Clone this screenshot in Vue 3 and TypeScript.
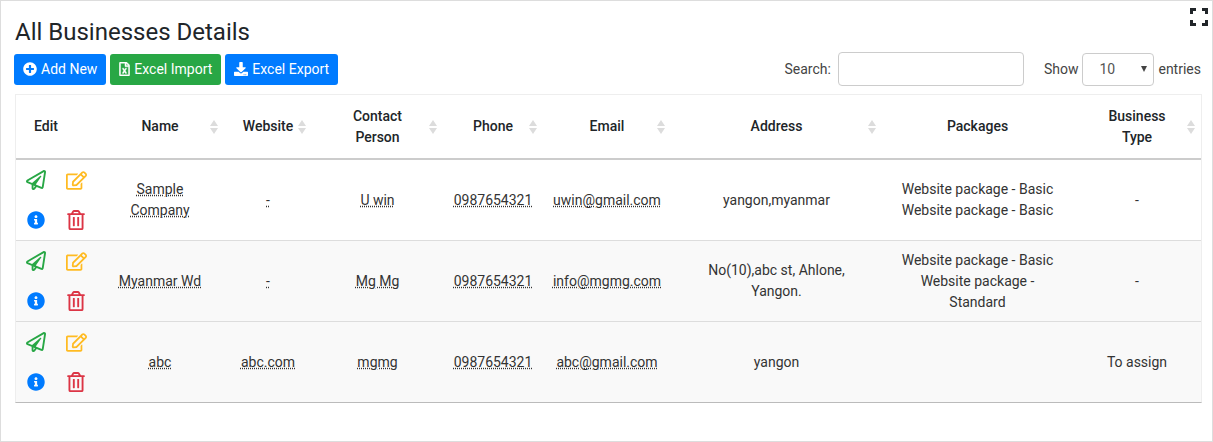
<script setup lang="ts">
import { ref } from 'vue'

interface Business {
  name: string
  website: string
  contact: string
  phone: string
  email: string
  address: string
  packages: string[]
  type: string
}

interface Column {
  label: string
  key: string
  sortable: boolean
}

const columns: Column[] = [
  { label: 'Edit', key: 'edit', sortable: false },
  { label: 'Name', key: 'name', sortable: true },
  { label: 'Website', key: 'website', sortable: true },
  { label: 'Contact Person', key: 'contact', sortable: true },
  { label: 'Phone', key: 'phone', sortable: true },
  { label: 'Email', key: 'email', sortable: true },
  { label: 'Address', key: 'address', sortable: true },
  { label: 'Packages', key: 'packages', sortable: false },
  { label: 'Business Type', key: 'type', sortable: true },
]

const businesses: Business[] = [
  {
    name: 'Sample Company',
    website: '-',
    contact: 'U win',
    phone: '0987654321',
    email: 'uwin@gmail.com',
    address: 'yangon,myanmar',
    packages: ['Website package - Basic', 'Website package - Basic'],
    type: '-',
  },
  {
    name: 'Myanmar Wd',
    website: '-',
    contact: 'Mg Mg',
    phone: '0987654321',
    email: 'info@mgmg.com',
    address: 'No(10),abc st, Ahlone, Yangon.',
    packages: ['Website package - Basic', 'Website package - Standard'],
    type: '-',
  },
  {
    name: 'abc',
    website: 'abc.com',
    contact: 'mgmg',
    phone: '0987654321',
    email: 'abc@gmail.com',
    address: 'yangon',
    packages: [],
    type: 'To assign',
  },
]

const search = ref('')
const pageSize = ref('10')
</script>

<template>
  <main class="panel">
    <button class="fullscreen" type="button" aria-label="Full screen">
      <svg viewBox="0 0 18 18" width="18" height="18" fill="none" stroke="#212529" stroke-width="3">
        <path d="M1.500 6V1.500H6M12 1.500H16.500V6M16.500 12V16.500H12M6 16.500H1.500V12" />
      </svg>
    </button>
    <h1>All Businesses Details</h1>
    <div class="toolbar">
      <div class="actions">
        <button class="btn blue" type="button">
          <svg viewBox="0 0 512 512" width="14" height="14" fill="currentColor">
            <path d="M256 8C119 8 8 119 8 256s111 248 248 248 248-111 248-248S393 8 256 8zm144 276c0 6.600-5.400 12-12 12h-92v92c0 6.600-5.400 12-12 12h-56c-6.600 0-12-5.400-12-12v-92h-92c-6.600 0-12-5.400-12-12v-56c0-6.600 5.400-12 12-12h92v-92c0-6.600 5.400-12 12-12h56c6.600 0 12 5.400 12 12v92h92c6.600 0 12 5.400 12 12v56z" />
          </svg>
          <span>Add New</span>
        </button>
        <button class="btn green" type="button">
          <svg viewBox="0 0 384 512" width="11" height="14" fill="currentColor">
            <path d="M369.900 97.900L286 14C277 5 264.800-.1 252.100-.1H48C21.500 0 0 21.500 0 48v416c0 26.500 21.500 48 48 48h288c26.500 0 48-21.500 48-48V131.900c0-12.700-5.100-25-14.100-34zM332.100 128H256V51.900l76.100 76.100zM48 464V48h160v104c0 13.300 10.700 24 24 24h104v288H48zm212-240h-28.800c-4.400 0-8.400 2.400-10.500 6.300-18 33.100-22.200 42.400-28.600 57.700-13.900-29.100-6.900-17.300-28.600-57.700-2.100-3.900-6.200-6.300-10.600-6.300H124c-9.300 0-15 10-10.400 18l46.300 78-46.300 78c-4.700 8 1.100 18 10.400 18h28.900c4.400 0 8.400-2.400 10.500-6.300 21.700-40 23-45 28.600-57.700 14.900 30.200 5.900 15.900 28.600 57.700 2.100 3.900 6.200 6.300 10.600 6.300H260c9.300 0 15-10 10.400-18L224 320c.7-1.100 30.300-50.500 46.300-78 4.700-8-1.100-18-10.300-18z" stroke="currentColor" stroke-width="14" />
          </svg>
          <span>Excel Import</span>
        </button>
        <button class="btn blue" type="button">
          <svg viewBox="0 0 512 512" width="14" height="14" fill="currentColor">
            <path d="M216 0h80c13.300 0 24 10.700 24 24v168h87.700c17.800 0 26.700 21.500 14.100 34.100L269.700 378.300c-7.500 7.500-19.800 7.500-27.300 0L90.100 226.100c-12.600-12.600-3.700-34.100 14.100-34.100H192V24c0-13.300 10.700-24 24-24zm296 376v112c0 13.300-10.700 24-24 24H24c-13.300 0-24-10.700-24-24V376c0-13.300 10.700-24 24-24h146.700l49 49c20.100 20.100 52.500 20.100 72.600 0l49-49H488c13.300 0 24 10.700 24 24zm-124 88c0-11-9-20-20-20s-20 9-20 20 9 20 20 20 20-9 20-20zm64 0c0-11-9-20-20-20s-20 9-20 20 9 20 20 20 20-9 20-20z" />
          </svg>
          <span>Excel Export</span>
        </button>
      </div>
      <div class="filters">
        <label class="search">Search:<input v-model="search" type="search" /></label>
        <label class="length">
          Show
          <span class="select-box">
            <select v-model="pageSize">
              <option>10</option>
              <option>25</option>
              <option>50</option>
              <option>100</option>
            </select>
            <svg viewBox="0 0 6 6" width="6" height="6"><path d="M0 0H6L3 6z" fill="#444" /></svg>
          </span>
          entries
        </label>
      </div>
    </div>

    <table>
      <colgroup>
        <col v-for="column in columns" :key="column.key" :class="'col-' + column.key" />
      </colgroup>
      <thead>
        <tr>
          <th v-for="column in columns" :key="column.key" :class="'head-' + column.key" scope="col">
            {{ column.label }}
            <svg v-if="column.sortable" class="sort" viewBox="0 0 8 14" width="8" height="14" fill="#dcdcdc">
              <path d="M4 0L8 6H0zM0 8H8L4 14z" />
            </svg>
          </th>
        </tr>
      </thead>
      <tbody>
        <tr v-for="business in businesses" :key="business.name">
          <td class="edit">
            <div class="icons">
              <button type="button" aria-label="Send" class="send">
                <svg viewBox="0 0 512 512" width="20" height="20" fill="currentColor">
                  <path d="M440 6.500L24 246.400c-34.400 19.900-31.100 70.800 5.700 85.900L144 379.600V464c0 46.400 59.200 65.500 86.600 28.600l43.800-59.100 111.900 46.200c5.900 2.400 12.100 3.600 18.300 3.600 8.200 0 16.300-2.100 23.600-6.200 12.800-7.200 21.600-20 23.900-34.500l59.400-387.200c6.100-40.100-36.900-68.800-71.500-48.900zM192 464v-64.600l36.600 15.100L192 464zm212.600-28.700l-153.800-63.500L391 169.500c10.700-15.500-9.500-33.500-23.700-21.200L155.800 332.600 48 288 464 48l-59.400 387.300z" />
                </svg>
              </button>
              <button type="button" aria-label="Edit" class="modify">
                <svg viewBox="0 0 576 512" width="21" height="19" fill="currentColor">
                  <path d="M402.300 344.900l32-32c5-5 13.700-1.500 13.700 5.700V464c0 26.500-21.500 48-48 48H48c-26.500 0-48-21.500-48-48V112c0-26.500 21.500-48 48-48h273.500c7.100 0 10.700 8.600 5.700 13.700l-32 32c-1.500 1.500-3.500 2.300-5.700 2.300H48v352h352V350.500c0-2.100.8-4.100 2.300-5.600zm156.600-201.800L296.300 405.700l-90.400 10c-26.200 2.900-48.500-19.200-45.600-45.600l10-90.400L432.900 17.100c22.900-22.900 59.900-22.900 82.700 0l43.200 43.200c22.900 22.900 22.900 60 .1 82.800zM460.100 174L402 115.900 216.200 301.800l-7.300 65.300 65.300-7.300L460.100 174zm64.800-79.700l-43.200-43.200c-4.100-4.100-10.800-4.100-14.800 0L436 82l58.100 58.100 30.900-30.900c4-4.200 4-10.800-.1-14.900z" />
                </svg>
              </button>
              <button type="button" aria-label="Information" class="info">
                <svg viewBox="0 0 512 512" width="18" height="18" fill="currentColor">
                  <path d="M256 8C119 8 8 119.100 8 256c0 137 111 248 248 248s248-111 248-248C504 119.100 393 8 256 8zm0 110c23.200 0 42 18.800 42 42s-18.800 42-42 42-42-18.800-42-42 18.800-42 42-42zm56 254c0 6.600-5.400 12-12 12h-88c-6.600 0-12-5.400-12-12v-24c0-6.600 5.400-12 12-12h12v-64h-12c-6.600 0-12-5.400-12-12v-24c0-6.600 5.400-12 12-12h64c6.600 0 12 5.400 12 12v100h12c6.600 0 12 5.400 12 12v24z" />
                </svg>
              </button>
              <button type="button" aria-label="Delete" class="remove">
                <svg viewBox="0 0 448 512" width="18" height="20" fill="currentColor">
                  <path d="M268 416h24a12 12 0 0 0 12-12V188a12 12 0 0 0-12-12h-24a12 12 0 0 0-12 12v216a12 12 0 0 0 12 12zM432 80h-82.400l-34-56.700A48 48 0 0 0 274.400 0H173.600a48 48 0 0 0-41.200 23.300L98.400 80H16A16 16 0 0 0 0 96v16a16 16 0 0 0 16 16h16v336a48 48 0 0 0 48 48h288a48 48 0 0 0 48-48V128h16a16 16 0 0 0 16-16V96a16 16 0 0 0-16-16zM171.800 50.900a6 6 0 0 1 5.200-2.900h94a6 6 0 0 1 5.200 2.900L293.600 80H154.400zM368 464H80V128h288zm-212-48h24a12 12 0 0 0 12-12V188a12 12 0 0 0-12-12h-24a12 12 0 0 0-12 12v216a12 12 0 0 0 12 12z" />
                </svg>
              </button>
            </div>
          </td>
          <td class="narrow"><abbr>{{ business.name }}</abbr></td>
          <td><abbr>{{ business.website }}</abbr></td>
          <td><abbr>{{ business.contact }}</abbr></td>
          <td><abbr>{{ business.phone }}</abbr></td>
          <td><abbr>{{ business.email }}</abbr></td>
          <td class="address">{{ business.address }}</td>
          <td class="packages"><div v-for="(item, index) in business.packages" :key="index">{{ item }}</div></td>
          <td>{{ business.type }}</td>
        </tr>
      </tbody>
    </table>
  </main>
</template>

<style>
body {
  background: #fff;
}
</style>

<style scoped>
* {
  box-sizing: border-box;
}
.panel {
  position: relative;
  min-height: 100vh;
  padding: 15px 11px 32px 14px;
  border: 1px solid #ddd;
  color: #212529;
  font: 14px/21px Roboto, "Liberation Sans", sans-serif;
}
button {
  padding: 0;
  border: 0;
  background: none;
  font: inherit;
  cursor: pointer;
}
svg {
  display: block;
}
.fullscreen {
  position: absolute;
  top: 7px;
  right: 4px;
}
h1 {
  margin: 0;
  font-size: 24px;
  font-weight: 400;
  line-height: 32px;
}
.toolbar {
  display: flex;
  justify-content: space-between;
  align-items: center;
  margin: 4px 0 8px -1px;
}
.actions,
.filters,
.search,
.length {
  display: flex;
  align-items: center;
}
.actions {
  gap: 4px;
}
.btn {
  display: flex;
  align-items: center;
  gap: 4px;
  height: 31px;
  padding: 0 9px;
  border-radius: 3px;
  color: #fff;
  white-space: nowrap;
}
.blue {
  background: #007bff;
}
.green {
  background: #28a745;
}
.filters {
  gap: 20px;
  color: #444;
}
.search {
  gap: 7px;
}
.search input {
  width: 186px;
  height: 34px;
  padding: 0 8px;
  border: 1px solid #ccc;
  border-radius: 4px;
  background: #fff;
  font: inherit;
}
.length {
  gap: 4px;
}
.select-box {
  position: relative;
}
.select-box svg {
  position: absolute;
  top: 13px;
  right: 7px;
  pointer-events: none;
}
select {
  display: block;
  width: 72px;
  height: 33px;
  padding: 0 16px;
  border: 1px solid #ccc;
  border-radius: 4px;
  appearance: none;
  background: #fff;
  color: #555;
  font: inherit;
}
table {
  width: 100%;
  border: 1px solid #eee;
  border-bottom-color: #bbb;
  border-spacing: 0;
  table-layout: fixed;
}
.col-edit {
  width: 80px;
}
.col-name,
.col-email,
.col-type {
  width: 128px;
}
.col-website {
  width: 88px;
}
.col-contact {
  width: 131px;
}
.col-phone {
  width: 100px;
}
.col-address {
  width: 211px;
}
.col-packages {
  width: 191px;
}
th {
  position: relative;
  height: 65px;
  padding: 0 8px;
  border-bottom: 2px solid #ccc;
  font-weight: 500;
}
.head-edit {
  padding-right: 28px;
}
.head-contact,
.head-type {
  padding: 0 32px;
}
.sort {
  position: absolute;
  top: 25px;
  right: 6px;
}
td {
  height: 81px;
  padding: 0 8px;
  border-bottom: 1px solid #ddd;
  color: #333;
  text-align: center;
}
tbody tr:last-child td {
  height: 80px;
  border-bottom: 0;
}
tbody tr:nth-child(n + 2) td {
  background: #f9f9f9;
}
.narrow {
  padding: 0 20px;
}
.address,
.packages {
  padding: 0 16px;
}
td.edit {
  padding: 0;
}
.icons {
  display: grid;
  grid-template-columns: 1fr 1fr;
  grid-auto-rows: 40px;
  place-items: center;
}
.icons .send {
  color: #28a745;
}
.icons .modify {
  color: #ffbb22;
}
.icons .info {
  color: #007bff;
}
.icons .remove {
  color: #dc3545;
}
abbr {
  text-decoration: underline dotted;
}
</style>
